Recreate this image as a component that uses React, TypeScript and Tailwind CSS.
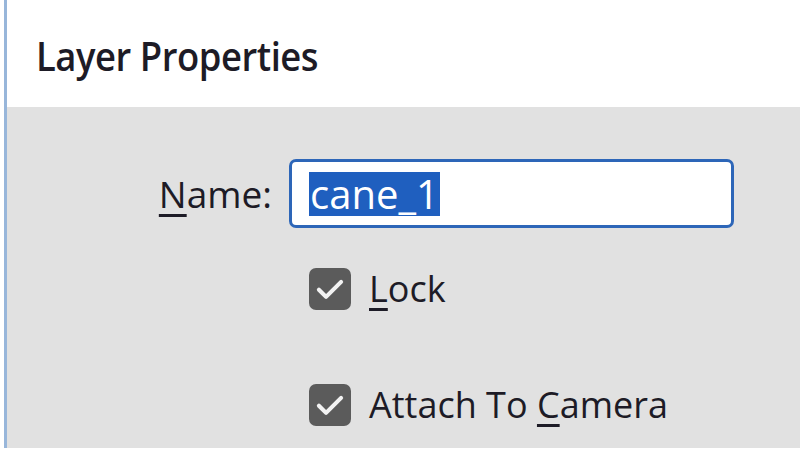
import React from 'react';

const font = { fontFamily: '"Open Sans", "Noto Sans", sans-serif' };

function Check() {
  return (
    <span className="flex h-[42px] w-[42px] items-center justify-center rounded-[7px] bg-[#5b5b5b]">
      <svg width="38" height="38" viewBox="0 0 24 24" fill="none">
        <path d="M5 12.5l4.5 4.5L19 7.5" stroke="#f2f2f2" strokeWidth="2.6" strokeLinecap="round" strokeLinejoin="round" />
      </svg>
    </span>
  );
}

export default function App() {
  return (
    <div className="h-[453px] w-[800px] overflow-hidden bg-white text-[#1d1b26]" style={font}>
      <div className="ml-[4px] flex h-[448px] flex-col border-l-[3px] border-[#98b6da]">
        {/* Header */}
        <div className="flex h-[107px] items-center bg-white pl-[29px] pt-[4px]">
          <h1 className="origin-left scale-x-[0.91] text-[40px] font-semibold leading-none tracking-[-0.5px]">Layer Properties</h1>
        </div>

        {/* Body */}
        <div className="flex-1 bg-[#e1e1e1] pt-[52px]">
          <div className="flex items-center">
            <label className="w-[282px] pr-[17px] text-right text-[37px] leading-none">
              <span className="underline decoration-[3px] underline-offset-[6px]">N</span>ame:
            </label>
            <div className="flex h-[69px] w-[445px] items-center rounded-[7px] border-[3px] border-[#2d66b8] bg-white pl-[17px]">
              <span className="bg-[#1f5fbf] px-[1px] py-[2px] text-[40px] leading-none text-white">cane_1</span>
            </div>
          </div>

          <div className="ml-[302px] mt-[40px] flex flex-col gap-[74px]">
            <div className="flex items-center gap-[18px]">
              <Check />
              <span className="text-[36px] leading-none">
                <span className="underline decoration-[3px] underline-offset-[6px]">L</span>ock
              </span>
            </div>
            <div className="flex items-center gap-[18px]">
              <Check />
              <span className="text-[36px] leading-none">
                Attach To <span className="underline decoration-[3px] underline-offset-[6px]">C</span>amera
              </span>
            </div>
          </div>
        </div>
      </div>
    </div>
  );
}
